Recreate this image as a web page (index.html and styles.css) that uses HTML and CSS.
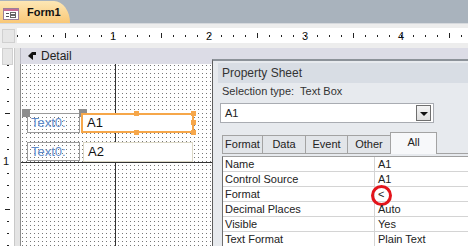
FILE: index.html
```html
<!DOCTYPE html>
<html>
<head>
    <title>Form1 - Design View</title>
    <meta charset="utf-8" />
    <link rel="stylesheet" href="styles.css">
</head>
<body>
    <div class="window">
        <div class="doc-tabs">
            <div class="doc-tab">
                <svg class="form-icon" width="16" height="12" viewBox="0 0 16 12">
                    <rect x="0.5" y="0.5" width="15" height="11" fill="#fff" stroke="#9a7f9a"/>
                    <rect x="1" y="1" width="14" height="2" fill="#c86a94"/>
                    <rect x="3" y="5" width="3" height="1" fill="#555"/>
                    <rect x="3" y="8" width="3" height="1" fill="#555"/>
                    <rect x="7.5" y="4.5" width="5" height="2" fill="none" stroke="#666"/>
                    <rect x="7.5" y="7.5" width="5" height="2" fill="none" stroke="#666"/>
                </svg>
                <span>Form1</span>
            </div>
        </div>

        <div class="ruler-strip">
            <div class="ruler-corner"></div>
            <div class="hruler">
                <span class="inch">1</span>
                <span class="inch">2</span>
                <span class="inch">3</span>
                <span class="inch">4</span>
            </div>
        </div>

        <div class="workspace">
            <div class="vruler-col">
                <div class="vruler-head"></div>
                <div class="vruler"><span class="vinch">1</span></div>
            </div>
            <div class="section">
                <div class="section-bar">
                    <svg class="section-icon" width="10" height="10" viewBox="0 0 10 10">
                        <path d="M9 1 L9 4 L6 4 L6 9 L1 5 L5 1 Z" fill="#111"/>
                    </svg>
                    <span>Detail</span>
                </div>
                <div class="design-grid">
                    <div class="label label-1">Text0:</div>
                    <div class="move-handle mh-label"></div>
                    <div class="move-handle mh-box"></div>
                    <div class="textbox textbox-selected">A1
                        <i class="sizer s-tm"></i><i class="sizer s-tr"></i>
                        <i class="sizer s-mr"></i>
                        <i class="sizer s-bm"></i><i class="sizer s-br"></i>
                    </div>
                    <div class="label label-2">Text0:</div>
                    <div class="textbox textbox-2">A2</div>
                </div>
            </div>

            <div class="property-sheet">
                <div class="ps-title">Property Sheet</div>
                <div class="ps-type">Selection type:&nbsp; Text Box</div>
                <div class="ps-combo">
                    <span>A1</span>
                    <div class="ps-drop"><i class="ps-arrow"></i></div>
                </div>
                <div class="ps-tabs">
                    <div class="ps-tab">Format</div>
                    <div class="ps-tab">Data</div>
                    <div class="ps-tab">Event</div>
                    <div class="ps-tab">Other</div>
                    <div class="ps-tab active">All</div>
                </div>
                <div class="ps-grid">
                    <div class="ps-row"><div class="ps-name">Name</div><div class="ps-value">A1</div></div>
                    <div class="ps-row"><div class="ps-name">Control Source</div><div class="ps-value">A1</div></div>
                    <div class="ps-row"><div class="ps-name">Format</div><div class="ps-value">&lt;<span class="mark"></span></div></div>
                    <div class="ps-row"><div class="ps-name">Decimal Places</div><div class="ps-value">Auto</div></div>
                    <div class="ps-row"><div class="ps-name">Visible</div><div class="ps-value">Yes</div></div>
                    <div class="ps-row"><div class="ps-name">Text Format</div><div class="ps-value">Plain Text</div></div>
                </div>
            </div>
        </div>
    </div>
</body>
</html>
```

FILE: styles.css
```css
body {
    margin: 0;
    font-family: "Liberation Sans", Arial, sans-serif;
    font-size: 11px;
    color: #222;
}
.window {
    width: 468px;
    height: 246px;
    overflow: hidden;
    display: flex;
    flex-direction: column;
    background: #e4e4e4;
}

/* document tab */
.doc-tabs {
    height: 23px;
    background: #a9b3bd;
    display: flex;
    align-items: flex-end;
    flex-shrink: 0;
}
.doc-tab {
    width: 70px;
    height: 22px;
    display: flex;
    align-items: center;
    gap: 8px;
    padding-left: 3px;
    box-sizing: border-box;
    background: linear-gradient(#fde7b5, #f9c877);
    border-radius: 0 16px 0 0 / 0 22px 0 0;
    font-size: 11px;
    font-weight: bold;
    color: #111;
}
.form-icon {
    margin-top: 3px;
}

/* horizontal ruler */
.ruler-strip {
    height: 25px;
    display: flex;
    padding: 4px 0 5px;
    box-sizing: border-box;
    flex-shrink: 0;
    background: #ededed;
    border-top: 1px solid #d6d9dd;
}
.ruler-corner {
    width: 13px;
    margin: 1px 2px 0 2px;
    background: #e6e6e6;
    border: 1px solid #d0d0d0;
    box-sizing: border-box;
}
.hruler {
    flex: 1;
    display: flex;
    padding-left: 48px;
    background-color: #fff;
    background-image:
        linear-gradient(90deg, #222 1px, transparent 1px),
        linear-gradient(90deg, #222 1px, transparent 1px);
    background-size: 12px 2px, 96px 5px;
    background-position: 12px 7px, 48px 5px;
    background-repeat: repeat-x;
}
.inch {
    width: 96px;
    text-align: center;
    line-height: 16px;
    font-size: 11px;
    color: #111;
}

/* design surface */
.workspace {
    flex: 1;
    display: flex;
    position: relative;
}
.vruler-col {
    width: 15px;
    display: flex;
    flex-direction: column;
    margin-right: 5px;
    background: #fff;
    border-right: 1px solid #c9c9c9;
    box-sizing: border-box;
}
.vruler-head {
    height: 17px;
    margin: 0 1px 0 2px;
    background: #e6e6e6;
    border: 1px solid #d0d0d0;
    box-sizing: border-box;
}
.vruler {
    flex: 1;
    padding-top: 89px;
    background-image:
        linear-gradient(#222 1px, transparent 1px),
        linear-gradient(#222 1px, transparent 1px);
    background-size: 2px 12px, 5px 96px;
    background-position: 7px 12px, 5px 48px;
    background-repeat: repeat-y;
}
.vinch {
    display: block;
    width: 12px;
    text-align: center;
    line-height: 14px;
    background: #fff;
    color: #111;
}
.section {
    flex: 1;
    display: flex;
    flex-direction: column;
}
.section-bar {
    height: 16px;
    display: flex;
    align-items: center;
    gap: 4px;
    padding-left: 6px;
    background: #dcdce6;
    border-left: 1px solid #b9b9c4;
    box-sizing: border-box;
    font-size: 12px;
    color: #222;
}
.design-grid {
    flex: 1;
    position: relative;
    border-left: 1px solid #8c8c8c;
    background:
        linear-gradient(90deg, transparent 94px, #333 94px, #333 95px, transparent 95px),
        linear-gradient(transparent 98px, #333 98px, #333 99px, transparent 99px),
        conic-gradient(at 1px 1px, transparent 0 75%, #777 75% 100%) 1px 1px / 4px 4px,
        #fff;
}

/* controls on the form */
.label {
    position: absolute;
    left: 6px;
    width: 53px;
    height: 20px;
    padding-left: 3px;
    box-sizing: border-box;
    border: 1px solid #9a9a9a;
    font-size: 13px;
    line-height: 18px;
    color: #5f8ac8;
}
.label-1 { top: 49px; }
.label-2 { top: 78px; height: 19px; }
.move-handle {
    position: absolute;
    top: 45px;
    width: 8px;
    height: 8px;
    background: #8e8e8e;
}
.mh-label { left: 1px; }
.mh-box { left: 58px; }
.textbox {
    position: absolute;
    background: #fff;
    box-sizing: border-box;
    font-size: 13px;
    padding-left: 4px;
    color: #111;
}
.textbox-selected {
    left: 60px;
    top: 49px;
    width: 113px;
    height: 20px;
    border: 2px solid #f6a74a;
    line-height: 16px;
}
.textbox-2 {
    left: 62px;
    top: 78px;
    width: 110px;
    height: 20px;
    border: 1px solid #dcd8c6;
    line-height: 18px;
}
.sizer {
    position: absolute;
    width: 5px;
    height: 5px;
    background: #f6a74a;
}
.s-tm { top: -4px; left: 51px; }
.s-tr { top: -4px; right: -4px; }
.s-mr { top: 5px; right: -4px; }
.s-bm { bottom: -4px; left: 51px; }
.s-br { bottom: -4px; right: -4px; }

/* property sheet (docked pane over the designer) */
.property-sheet {
    position: absolute;
    left: 212px;
    top: 11px;
    right: 0;
    bottom: 0;
    background: #e7eaee;
    border-left: 1px solid #5c5c5c;
    border-top: 2px solid #8c9299;
}
.ps-title {
    margin: 2px 0 0 5px;
    height: 20px;
    padding-left: 4px;
    background: #d8dde4;
    font-size: 12px;
    line-height: 20px;
    color: #333;
}
.ps-type {
    height: 16px;
    padding-left: 9px;
    line-height: 16px;
    color: #333;
}
.ps-combo {
    margin: 4px 0 0 7px;
    width: 214px;
    height: 20px;
    display: flex;
    align-items: center;
    justify-content: space-between;
    padding: 0 2px 0 4px;
    box-sizing: border-box;
    background: #fff;
    border: 1px solid #a9acb2;
}
.ps-drop {
    width: 15px;
    height: 16px;
    display: flex;
    align-items: center;
    justify-content: center;
    box-sizing: border-box;
    border: 1px solid #6f6f6f;
    background: linear-gradient(#f4f4f4, #dedede);
}
.ps-arrow {
    width: 0;
    height: 0;
    margin-top: 2px;
    border-left: 4px solid transparent;
    border-right: 4px solid transparent;
    border-top: 4px solid #111;
}
.ps-tabs {
    margin: 9px 0 0 9px;
    height: 21px;
    display: flex;
    align-items: flex-end;
    border-bottom: 1px solid #a3a3a3;
}
.ps-tab {
    height: 18px;
    line-height: 17px;
    text-align: center;
    box-sizing: border-box;
    background: #e2e5e9;
    border: 1px solid #a3a3a3;
    border-bottom: none;
    margin-right: -1px;
}
.ps-tab:nth-child(1) { width: 41px; }
.ps-tab:nth-child(2) { width: 44px; }
.ps-tab:nth-child(3) { width: 43px; }
.ps-tab:nth-child(4) { width: 44px; }
.ps-tab.active {
    width: 47px;
    height: 22px;
    margin-bottom: -1px;
    line-height: 18px;
    background: #f7f8fa;
}
.ps-grid {
    margin: 2px 0 0 9px;
    background: #fff;
    border-top: 1px solid #a0a0a0;
    border-left: 1px solid #6f6f6f;
}
.ps-row {
    height: 15px;
    display: flex;
    border-bottom: 1px solid #d4d4d4;
    box-sizing: border-box;
    line-height: 14px;
}
.ps-name {
    width: 152px;
    padding-left: 2px;
    box-sizing: border-box;
    border-right: 1px solid #d4d4d4;
}
.ps-value {
    flex: 1;
    padding-left: 3px;
    position: relative;
}
.mark {
    position: absolute;
    left: -4px;
    top: -2px;
    width: 21px;
    height: 21px;
    box-sizing: border-box;
    border: 3px solid #e3141b;
    border-radius: 50%;
}
```
